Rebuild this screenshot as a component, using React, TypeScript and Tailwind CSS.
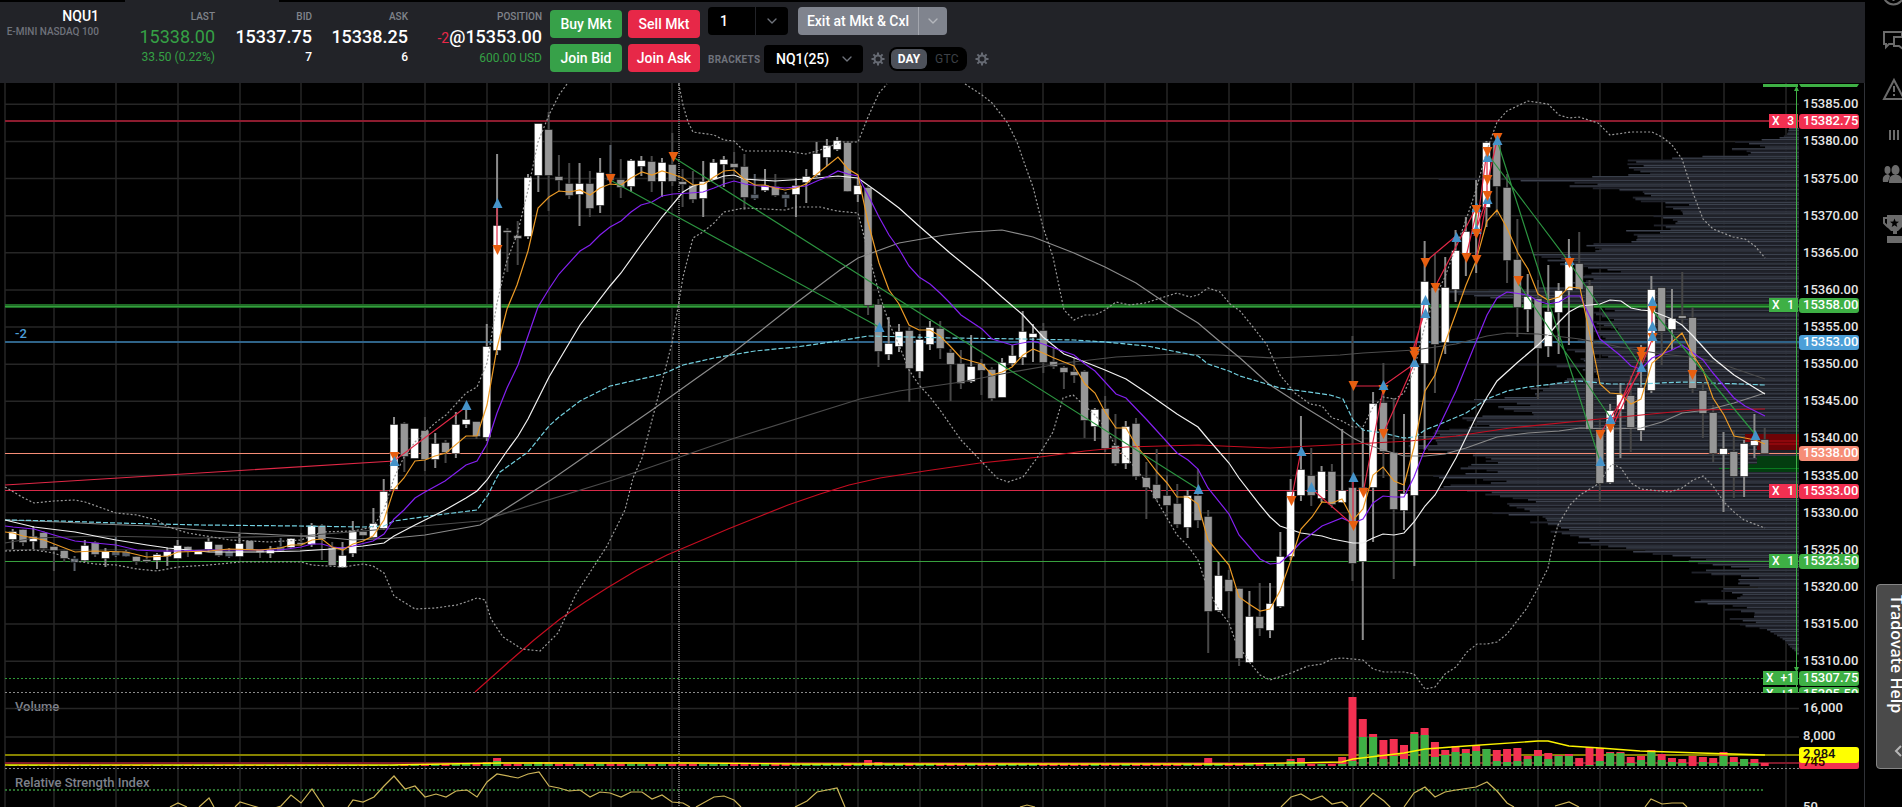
import { useState } from "react";
import { ChevronDown } from "lucide-react";
import clsx from "clsx";

type Point = [number, number];
type Kind = "up" | "down" | "flat";
// body top, body bottom, wick top, wick bottom
type Candle = [Kind, number, number, number, number];
type Trade = ["buy" | "sell", number, number];

const FIRST_X = 12.7;
const STEP = 10.306;
const LEFT = 5;
const RIGHT = 1799;
const TOP = 83;

const u: Kind = "up";
const d: Kind = "down";
const f: Kind = "flat";

const candles: Candle[] = [
  [u, 532, 539, 529, 549], [d, 530, 542, 529, 546], [u, 537, 541, 526, 549], [d, 533, 548, 531, 551],
  [d, 547, 550, 544, 571], [d, 551, 558, 550, 562], [f, 559, 562, 556, 571], [u, 546, 560, 540, 562],
  [d, 543, 554, 541, 557], [u, 552, 558, 548, 567], [f, 552, 555, 537, 557], [f, 552, 556, 550, 557],
  [d, 557, 561, 556, 565], [d, 560, 561, 552, 563], [u, 555, 560, 553, 569], [u, 552, 556, 548, 566],
  [u, 546, 558, 540, 558], [d, 547, 551, 546, 557], [u, 551, 554, 551, 554], [u, 542, 549, 538, 552],
  [d, 545, 555, 545, 557], [f, 552, 556, 548, 558], [u, 544, 556, 534, 556], [d, 541, 549, 541, 549],
  [d, 550, 552, 549, 558], [u, 550, 553, 546, 558], [f, 547, 551, 538, 552], [u, 539, 547, 538, 548],
  [d, 543, 544, 533, 546], [u, 526, 544, 523, 547], [d, 526, 539, 524, 560], [d, 548, 565, 542, 565],
  [u, 556, 567, 542, 567], [u, 531, 553, 521, 557], [d, 532, 535, 531, 536], [u, 524, 537, 508, 538],
  [u, 492, 528, 479, 530], [u, 425, 489, 417, 489], [d, 424, 456, 422, 472], [u, 429, 458, 429, 458],
  [d, 431, 459, 417, 471], [u, 444, 459, 433, 468], [d, 443, 452, 440, 463], [u, 425, 453, 412, 458],
  [u, 420, 424, 408, 428], [d, 422, 436, 422, 439], [u, 347, 437, 324, 441], [u, 226, 350, 154, 355],
  [d, 231, 232, 228, 272], [d, 236, 238, 221, 265], [u, 178, 236, 174, 239], [u, 124, 175, 124, 192],
  [d, 130, 175, 112, 211], [d, 177, 180, 155, 191], [d, 184, 195, 163, 199], [u, 184, 194, 163, 226],
  [d, 184, 208, 171, 217], [u, 173, 205, 158, 213], [f, 174, 180, 145, 184], [d, 180, 187, 159, 198],
  [u, 161, 186, 159, 192], [u, 161, 166, 156, 176], [d, 162, 181, 156, 192], [u, 163, 181, 158, 197],
  [d, 165, 181, 133, 186], [d, 182, 184, 169, 207], [d, 186, 199, 171, 203], [u, 182, 198, 161, 217],
  [u, 163, 179, 159, 180], [u, 160, 164, 156, 187], [d, 164, 167, 152, 174], [d, 167, 197, 154, 210],
  [f, 195, 198, 174, 200], [u, 186, 190, 169, 192], [d, 187, 195, 174, 197], [f, 195, 198, 192, 207],
  [u, 186, 194, 178, 217], [u, 177, 182, 169, 203], [u, 154, 175, 142, 177], [u, 146, 157, 139, 166],
  [u, 141, 149, 137, 151], [d, 143, 191, 142, 192], [u, 186, 194, 178, 202], [d, 188, 305, 186, 315],
  [d, 305, 351, 299, 367], [u, 344, 354, 317, 360], [u, 332, 346, 324, 352], [d, 331, 368, 327, 402],
  [u, 340, 371, 334, 378], [u, 328, 344, 321, 350], [d, 329, 348, 321, 359], [d, 353, 364, 349, 401],
  [d, 364, 383, 350, 389], [u, 367, 381, 335, 383], [d, 364, 370, 359, 395], [d, 370, 398, 367, 401],
  [u, 363, 397, 358, 397], [u, 356, 363, 345, 366], [u, 332, 357, 311, 365], [u, 334, 337, 324, 362],
  [d, 331, 362, 323, 373], [d, 362, 366, 348, 369], [d, 368, 372, 366, 389], [d, 372, 375, 358, 383],
  [d, 372, 420, 370, 438], [u, 410, 426, 408, 441], [d, 409, 448, 396, 452], [d, 446, 463, 414, 466],
  [u, 427, 463, 421, 469], [d, 424, 476, 418, 480], [d, 478, 487, 462, 519], [d, 485, 498, 449, 501],
  [d, 496, 505, 475, 516], [d, 504, 524, 484, 528], [u, 496, 527, 490, 538], [d, 496, 520, 469, 528],
  [d, 517, 611, 510, 653], [u, 576, 610, 562, 612], [d, 580, 591, 570, 618], [d, 589, 658, 588, 666],
  [u, 617, 662, 591, 662], [d, 617, 628, 583, 636], [u, 604, 630, 583, 638], [u, 557, 606, 532, 608],
  [u, 492, 556, 479, 560], [u, 470, 495, 416, 501], [d, 476, 495, 448, 506], [u, 472, 498, 466, 502],
  [d, 472, 504, 464, 508], [u, 491, 502, 429, 503], [d, 488, 563, 336, 581], [u, 488, 561, 428, 640],
  [u, 404, 487, 392, 542], [d, 403, 451, 363, 478], [d, 453, 509, 398, 579], [u, 494, 510, 414, 530],
  [u, 366, 495, 355, 566], [u, 282, 363, 241, 450], [d, 288, 344, 254, 393], [u, 288, 342, 257, 354],
  [u, 251, 289, 230, 302], [u, 232, 253, 217, 276], [u, 209, 232, 180, 273], [u, 143, 207, 141, 227],
  [d, 143, 186, 135, 215], [d, 188, 260, 174, 283], [d, 260, 307, 219, 337], [u, 297, 309, 274, 332],
  [d, 299, 348, 280, 399], [u, 312, 346, 265, 357], [u, 291, 312, 283, 354], [u, 262, 290, 239, 345],
  [d, 264, 289, 232, 290], [d, 286, 429, 280, 430], [d, 430, 483, 420, 502], [u, 411, 482, 404, 484],
  [u, 395, 409, 383, 458], [d, 396, 427, 376, 452], [u, 388, 430, 345, 441], [u, 290, 390, 276, 393],
  [d, 288, 331, 288, 365], [u, 319, 329, 289, 350], [d, 316, 318, 272, 325], [d, 318, 388, 307, 393],
  [d, 391, 413, 383, 438], [d, 413, 453, 405, 462], [u, 449, 454, 432, 512], [d, 452, 476, 430, 498],
  [u, 444, 476, 440, 497], [u, 441, 445, 414, 458], [d, 440, 453, 428, 453],
];

const emaFast =
  "5,532 13,533 23,536 44,540 75,552 95,551 126,552 147,557 168,556 178,552 209,551 229,549 260,550 280,548 291,545 301,545 312,540 322,539 332,547 343,550 353,544 363,541 373,536 384,520 394,489 404,478 415,461 425,460 435,456 446,453 466,436 477,436 487,405 497,348 507,309 517,285 528,251 538,208 549,197 559,191 569,192 580,190 590,195 600,188 610,184 621,185 631,178 642,172 652,175 662,171 672,174 683,178 693,185 704,184 714,177 724,171 734,170 744,179 755,185 765,185 775,188 785,190 796,188 806,184 817,174 827,166 838,157 848,169 858,175 868,222 879,263 889,290 899,304 909,325 919,330 930,330 940,336 950,346 961,358 971,361 982,364 992,375 1002,372 1012,367 1023,355 1033,349 1043,353 1054,358 1064,362 1074,366 1085,384 1095,393 1105,412 1116,428 1126,428 1136,445 1147,459 1157,472 1167,483 1177,497 1188,497 1198,504 1208,540 1218,552 1229,565 1239,597 1249,604 1260,611 1270,609 1280,591 1291,560 1301,529 1312,517 1322,502 1332,503 1342,499 1353,520 1363,509 1373,475 1383,467 1394,481 1404,485 1414,447 1425,391 1435,375 1445,343 1456,313 1466,285 1476,261 1487,221 1497,210 1507,228 1518,253 1528,269 1538,294 1548,300 1559,297 1569,287 1580,288 1590,335 1600,384 1610,393 1621,394 1631,404 1641,399 1652,363 1662,355 1672,342 1682,333 1693,355 1703,370 1713,398 1724,415 1734,436 1745,438 1755,440 1765,444";
const emaSlow =
  "5,526 13,527 34,529 54,535 75,541 95,543 116,545 137,550 157,551 178,551 209,550 240,550 280,550 301,547 312,544 322,544 332,547 343,548 353,546 373,541 384,534 394,519 404,510 415,498 425,492 445,481 466,465 477,461 487,444 497,413 507,388 518,365 528,336 538,307 549,289 559,274 580,251 590,245 600,235 610,227 621,221 631,212 641,205 652,202 662,196 673,194 690,193 703,192 714,188 724,184 734,181 745,184 760,186 785,188 806,186 817,181 827,177 838,171 848,174 858,176 868,195 879,217 889,235 899,249 909,266 919,277 930,284 940,293 950,303 961,315 982,329 992,339 1012,345 1033,341 1043,344 1054,348 1074,355 1085,364 1095,371 1116,394 1126,398 1147,420 1157,431 1177,453 1188,460 1198,469 1208,488 1229,514 1239,535 1260,559 1270,564 1280,563 1291,553 1301,542 1322,526 1342,518 1353,523 1363,519 1373,503 1383,496 1394,497 1404,497 1414,477 1425,449 1435,435 1456,391 1487,315 1497,298 1507,292 1528,295 1538,301 1548,304 1559,302 1569,296 1580,296 1590,317 1600,339 1621,356 1631,366 1641,369 1652,358 1672,350 1682,345 1703,360 1713,373 1734,398 1745,406 1765,416";
const sma20 =
  "5,520 34,527 75,532 95,536 116,540 147,545 168,548 209,552 260,552 300,551 332,549 363,546 384,543 394,536 415,525 445,510 466,498 477,491 487,480 507,451 518,436 528,419 549,377 580,325 610,286 621,273 641,245 662,217 683,192 693,186 704,183 724,176 734,175 744,179 775,181 806,179 838,176 858,178 879,193 899,208 919,226 950,253 982,279 1002,297 1023,315 1043,337 1064,354 1085,362 1105,370 1126,379 1147,393 1167,407 1177,414 1198,427 1208,439 1229,463 1239,478 1260,505 1270,517 1280,526 1301,533 1322,536 1332,539 1353,543 1363,543 1373,538 1383,534 1394,535 1404,533 1414,522 1425,506 1435,495 1456,458 1476,417 1487,397 1497,381 1518,362 1538,345 1548,335 1559,322 1569,312 1580,306 1600,304 1610,300 1621,301 1631,308 1641,310 1652,311 1672,319 1682,325 1693,336 1713,358 1734,375 1755,388 1765,394";
const sma50 =
  "5,520 60,522 100,524 150,526 200,530 240,533 280,535 322,537 353,540 394,538 425,535 480,525 551,480 610,439 652,410 694,380 735,351 796,303 840,270 858,258 899,243 945,235 971,232 1002,230 1033,237 1074,253 1105,267 1136,283 1167,304 1198,323 1218,340 1240,358 1270,385 1301,405 1332,424 1353,438 1363,443 1383,450 1404,456 1425,456 1445,454 1466,448 1497,437 1528,433 1559,431 1580,428 1610,429 1641,428 1662,422 1682,413 1707,410 1734,403 1765,393";
const sma100 =
  "5,543 34,538 100,536 200,538 300,536 363,531 480,521 613,480 735,438 860,399 899,391 961,382 1012,372 1064,363 1116,357 1177,354 1218,355 1276,358 1340,355 1363,353 1415,350 1456,344 1487,336 1507,333 1538,334 1580,339 1620,347 1662,354 1700,358 1730,367 1765,379";
const sma200 =
  "475,692 511,660 534,640 560,619 585,602 607,588 637,570 667,555 700,541 728,529 758,517 788,505 820,494 849,485 880,478 925,471 980,463 1040,457 1085,451 1126,447 1198,445 1270,448 1353,444 1410,441 1456,436 1510,428 1600,419 1693,410 1765,409";
const vwap =
  "5,520 60,521 116,523 200,525 300,526 363,527 384,526 394,521 415,518 445,514 477,510 488,495 496,479 500,472 528,452 549,426 559,417 580,401 610,386 641,379 663,374 683,365 714,358 755,351 796,347 838,341 868,336 950,338 1023,339 1074,340 1105,342 1147,346 1198,356 1208,364 1229,371 1240,376 1280,388 1330,395 1343,399 1353,420 1363,430 1383,433 1404,438 1415,437 1425,430 1445,422 1466,413 1487,399 1507,391 1528,387 1569,382 1580,381 1610,384 1640,384 1682,382 1740,384 1765,385";
const upperBands = [
  "5,487 22,497 34,503 54,501 75,500 85,502 116,513 137,515 157,520 168,527 188,533 230,540 270,542 301,540 322,532 353,531 373,527 384,510 394,478 404,457 415,442 435,423 446,415 466,393 477,387 487,363 497,303 507,260 517,235 528,190 538,142 549,115 559,95 567,84",
  "678,80 683,105 688,122 693,132 714,135 724,140 734,141 744,151 785,151 806,154 820,150 842,142 858,142 868,117 879,93 887,84",
  "965,84 982,95 992,103 1007,122 1017,142 1025,165 1033,187 1043,227 1053,257 1064,310 1074,320 1085,315 1095,315 1105,310 1116,302 1130,305 1145,303 1177,293 1190,297 1198,295 1208,288 1220,292 1230,304 1240,311 1253,327 1267,345 1280,375 1295,393 1310,404 1322,406 1332,418 1340,420 1353,427 1363,427 1373,407 1383,397 1395,399 1404,393 1414,370 1425,325 1435,297 1445,277 1456,247 1466,220 1476,190 1487,150 1497,122 1507,111 1528,101 1548,104 1559,115 1569,118 1579,117 1598,123 1610,135 1631,132 1652,132 1662,137 1672,145 1682,159 1693,193 1703,219 1713,229 1723,233 1733,237 1745,239 1755,246 1765,258",
];
const lowerBand =
  "5,551 34,550 54,553 75,561 95,564 116,565 137,569 157,571 178,567 209,565 240,562 301,562 312,565 343,567 363,564 373,566 384,573 394,596 415,609 435,608 457,605 466,602 477,598 485,600 491,619 503,637 522,649 540,651 558,633 576,594 607,546 625,510 633,478 642,458 652,420 662,382 672,343 683,277 693,238 703,232 714,223 724,212 744,208 765,209 785,210 796,207 820,207 837,211 858,213 865,240 879,293 889,323 899,345 909,370 919,385 930,397 940,410 961,440 982,462 997,478 1008,482 1023,477 1037,458 1053,432 1063,398 1073,395 1084,405 1095,415 1107,430 1116,447 1127,458 1147,483 1157,501 1177,535 1188,546 1198,560 1208,590 1219,610 1229,623 1235,640 1250,663 1260,675 1270,680 1291,673 1308,666 1322,664 1332,659 1342,658 1363,660 1373,669 1384,672 1404,672 1414,674 1425,689 1435,687 1445,674 1456,667 1467,652 1477,644 1487,644 1497,642 1507,634 1527,608 1538,588 1548,568 1553,543 1558,525 1570,505 1580,495 1598,484 1612,464 1621,468 1631,483 1641,489 1670,492 1682,488 1693,480 1703,476 1713,486 1724,502 1734,512 1744,520 1765,528";

const rsi = [
  "170,807 178,803 187,807",
  "199,807 209,798 214,807",
  "235,807 240,802 250,805 260,808",
  "275,808 281,806 291,795 301,803 312,789 324,807",
  "348,807 353,800 363,802 374,797 384,786 394,776 405,789 415,786 425,797 436,794 446,797 456,791 467,790 477,797 487,782 497,774 518,778 528,774 539,772 549,786 559,788 569,791 580,790 590,797 600,792 610,793 621,797 631,792 642,792 652,799 662,795 672,802 683,803 690,807",
  "696,807 714,797 724,796 734,800 741,807",
  "795,807 807,801 817,792 827,790 837,788 845,807",
  "1020,807 1027,805 1035,807",
  "1281,807 1291,797 1301,794 1311,800 1322,796 1332,804 1342,802 1348,807",
  "1360,807 1373,793 1384,801 1391,808",
  "1404,807 1414,793 1425,787 1435,797 1445,792 1456,790 1476,787 1487,782 1497,791 1507,803 1514,807",
  "1555,806 1569,802 1579,807",
  "1645,807 1651,799 1662,804 1672,803 1683,803 1687,807",
];

// y, left edge of the traded-volume row
const profile: Point[] = [
  [128, 1789], [134, 1787], [138, 1778], [141, 1735], [143, 1748], [146, 1755], [148, 1741], [151, 1755],
  [154, 1741], [156, 1685], [158, 1684], [159, 1633], [162, 1637], [163, 1620], [167, 1642], [170, 1640],
  [173, 1646], [175, 1605], [177, 1607], [178, 1442], [180, 1524], [182, 1575], [184, 1590], [186, 1583],
  [188, 1610], [191, 1640], [194, 1633], [197, 1644], [200, 1635], [204, 1675], [210, 1680], [215, 1665],
  [220, 1675], [223, 1662], [228, 1678], [230, 1620], [232, 1650], [236, 1645], [240, 1630], [245, 1595],
  [248, 1600], [250, 1595], [253, 1543], [256, 1545], [258, 1560], [260, 1537], [262, 1560], [264, 1575],
  [268, 1590], [270, 1610], [273, 1603], [276, 1580], [278, 1590], [281, 1568], [283, 1590], [286, 1580],
  [290, 1462], [293, 1465], [297, 1487], [300, 1520], [305, 1590], [310, 1600], [320, 1600], [330, 1606],
  [340, 1590], [350, 1580], [355, 1600], [362, 1590], [364, 1503], [366, 1560], [370, 1600], [375, 1590],
  [380, 1573], [385, 1533], [390, 1550], [393, 1530], [397, 1520], [401, 1441], [403, 1525], [407, 1510],
  [410, 1515], [413, 1535], [418, 1465], [421, 1475], [424, 1460], [426, 1490], [430, 1435], [433, 1423],
  [436, 1430], [440, 1435], [445, 1420], [450, 1430], [455, 1490], [458, 1495], [460, 1480], [463, 1490],
  [466, 1475], [468, 1460], [470, 1490], [473, 1485], [476, 1423], [480, 1505], [483, 1470], [488, 1435],
  [490, 1460], [494, 1500], [497, 1510], [500, 1525], [505, 1515], [510, 1520], [513, 1500], [516, 1545],
  [520, 1535], [524, 1560], [528, 1556], [532, 1570], [536, 1575], [540, 1585], [543, 1590], [547, 1615],
  [552, 1650], [556, 1680], [560, 1700], [563, 1705], [566, 1725], [568, 1738], [572, 1694], [576, 1745],
  [580, 1755], [582, 1738], [586, 1750], [590, 1730], [594, 1740], [598, 1720], [602, 1694], [606, 1735],
  [608, 1730], [612, 1755], [617, 1738], [622, 1757], [624, 1735], [628, 1765], [634, 1776], [640, 1785],
  [646, 1790], [650, 1795], [655, 1798],
];

const profileRows = Array.from({ length: 284 }, (_, i) => {
  const y = 128 + i * 1.856;
  const next = Math.max(1, profile.findIndex((p) => p[0] >= y));
  const [y0, x0] = profile[next - 1];
  const [y1, x1] = profile[next];
  const mid = x0 + ((x1 - x0) * (y - y0)) / (y1 - y0);
  const jitter = y > 142 && y < 620 ? ((i * 37) % 31) - 15 : 0;
  return { y, x: Math.min(mid + jitter, RIGHT - 1), bright: (i * 7) % 5 < 3 };
});

// in drawing order
const trades: Trade[] = [
  ["sell", 394, 457], ["buy", 394, 461], ["buy", 466, 405], ["buy", 497, 203], ["sell", 497, 250],
  ["sell", 610, 179], ["sell", 673, 157], ["buy", 879, 327], ["buy", 1198, 489], ["buy", 1301, 451],
  ["sell", 1291, 501], ["buy", 1311, 487], ["buy", 1353, 477], ["sell", 1353, 386], ["sell", 1353, 526],
  ["sell", 1363, 493], ["sell", 1383, 390], ["buy", 1383, 385], ["sell", 1383, 434], ["buy", 1414, 362],
  ["sell", 1414, 356], ["sell", 1414, 352], ["buy", 1425, 300], ["buy", 1425, 313], ["sell", 1425, 263],
  ["sell", 1435, 288], ["buy", 1456, 237], ["sell", 1466, 258], ["buy", 1476, 207], ["sell", 1476, 210],
  ["buy", 1476, 229], ["sell", 1476, 234], ["sell", 1476, 260], ["buy", 1487, 157], ["sell", 1487, 152],
  ["sell", 1487, 180], ["buy", 1487, 199], ["sell", 1487, 196], ["sell", 1497, 138], ["buy", 1497, 140],
  ["sell", 1518, 281], ["buy", 1569, 260], ["sell", 1569, 263], ["sell", 1600, 435], ["buy", 1600, 461],
  ["sell", 1610, 428], ["buy", 1610, 419], ["sell", 1641, 352], ["sell", 1641, 357], ["buy", 1641, 367],
  ["sell", 1652, 309], ["buy", 1652, 301], ["sell", 1652, 338], ["buy", 1652, 336], ["buy", 1652, 326],
  ["sell", 1692, 375], ["buy", 1755, 435],
];
const losingTrades =
  "M5 485L394 461L466 407M497 205V250M1291 501L1301 451M1312 489L1353 525V477M1353 386H1383L1414 364L1383 434M1363 493L1383 390M1414 356L1425 300M1413 350L1424 314M1425 262L1456 236M1435 287L1476 208M1466 257L1476 214M1476 260L1487 198L1474 236M1476 233L1487 150V200M1487 185L1497 140M1600 434L1641 370M1610 427L1641 355M1612 428L1643 362L1652 340V310";
const winningTrades =
  "M610 180L879 327M673 157L1198 489M1489 156L1569 262L1641 366M1497 140L1548 300L1600 461M1518 283L1610 417M1652 310L1755 434M1476 212V230";

// bar index -> [bar top, buy volume top]
const volume: Record<number, Point> = {
  46: [762, 763], 47: [758, 761], 51: [762, 762], 52: [762, 764], 83: [760, 765], 84: [762, 765],
  116: [758, 764], 124: [759, 761], 125: [758, 763], 129: [757, 764], 130: [697, 761], 131: [719, 737],
  132: [734, 737], 133: [740, 759], 134: [739, 756], 135: [745, 759], 136: [732, 734], 137: [728, 735],
  138: [742, 757], 139: [750, 755], 140: [746, 752], 141: [749, 753], 142: [745, 751], 143: [749, 749],
  144: [750, 761], 145: [749, 762], 146: [748, 761], 147: [756, 759], 148: [750, 756], 149: [753, 759],
  150: [755, 756], 151: [754, 756], 152: [758, 766], 153: [747, 765], 154: [748, 761], 155: [752, 753],
  156: [752, 753], 157: [757, 763], 158: [756, 760], 159: [750, 752], 160: [754, 760], 161: [758, 762],
  162: [759, 763], 163: [756, 766], 164: [757, 762], 165: [758, 763], 166: [752, 756], 167: [757, 762],
  168: [759, 759], 169: [759, 763], 170: [763, 766],
};

const prices = Array.from({ length: 16 }, (_, i) => 15385 - i * 5);
const priceY = (p: number) => 104.3 + (15385 - p) * 7.425;

const tags = [
  { y: 121, text: "15382.75", color: "#f23051", side: "X", qty: "3" },
  { y: 305, text: "15358.00", color: "#3eb045", side: "X", qty: "1" },
  { y: 342, text: "15353.00", color: "#4c9fd8" },
  { y: 453, text: "15338.00", color: "#f68d76" },
  { y: 491, text: "15333.00", color: "#f23051", side: "X", qty: "1" },
  { y: 561, text: "15323.50", color: "#3eb045", side: "X", qty: "1" },
  { y: 678, text: "15307.75", color: "#3eb045", side: "X", qty: "+1" },
  { y: 694, text: "15305.50", color: "#3eb045", side: "X", qty: "+1" },
];

const wickColor = { up: "#8c8c8c", down: "#474747", flat: "#5b626b" };
const bodyColor = { up: "#ffffff", down: "#979797", flat: "#59616b" };

function Grid() {
  return (
    <g stroke="#262626" strokeWidth={1.5}>
      <path d={`M${LEFT} ${TOP}V807`} />
      {Array.from({ length: 29 }, (_, i) => (
        <path key={i} d={`M${54 + Math.round(i * 61.84)} ${TOP}V807`} />
      ))}
      {prices.map((p) => (
        <path key={p} d={`M${LEFT} ${priceY(p)}H${RIGHT}`} />
      ))}
      <path d={`M${LEFT} 708.500H${RIGHT}M${LEFT} 737H${RIGHT}`} />
    </g>
  );
}

function VolumeProfile() {
  return (
    <g>
      {profileRows.map((row) => (
        <g key={row.y}>
          <rect x={row.x} y={row.y} width={RIGHT - row.x} height={1.9} fill="#20222a" />
          {row.bright && <rect x={row.x} y={row.y} width={RIGHT - row.x} height={0.8} fill="#454c59" />}
        </g>
      ))}
      <path d="M1745 434H1799V450H1757V442H1745Z" fill="#6d0306" />
      <path d="M1745 441H1799M1755 444H1799" stroke="#b00d12" />
      <path d="M1757 456H1799V472H1748V464H1757Z" fill="#033d10" />
      <path d="M1719 468.500H1799" stroke="#0a7a20" />
    </g>
  );
}

function Candles() {
  return (
    <g>
      {candles.map(([kind, top, bottom, high, low], i) => {
        const x = FIRST_X + i * STEP;
        return (
          <g key={i}>
            <rect x={x - 1} y={high} width={2} height={low - high} fill={wickColor[kind]} />
            <rect x={x - 4} y={top - 0.5} width={8} height={bottom - top + 1} fill={bodyColor[kind]} stroke="#000" strokeOpacity={0.5} />
          </g>
        );
      })}
    </g>
  );
}

function VolumePane() {
  return (
    <g>
      <path d={`M${LEFT} 755H${RIGHT}`} stroke="#868200" strokeWidth={2} />
      <path d={`M${LEFT} 763H${RIGHT}`} stroke="#7d1a2a" strokeWidth={2} />
      {candles.map(([kind], i) => {
        const x = FIRST_X + i * STEP - 4;
        const idle = i < 40 ? 765 : 764;
        const [top, buy] = volume[i] ?? [idle, kind === "up" ? idle : 766];
        return (
          <g key={i}>
            <rect x={x} y={top} width={8} height={766 - top} fill="#f23051" />
            <rect x={x} y={buy} width={8} height={766 - buy} fill="#3eb045" />
          </g>
        );
      })}
      <polyline
        points="5,765 390,765 500,763 690,763 800,764 1240,764 1342,762 1353,759 1404,753 1425,749 1466,746 1538,741 1548,741 1569,746 1600,748 1640,751 1700,753 1765,755"
        fill="none"
        stroke="#fcf400"
        strokeWidth={1.4}
      />
    </g>
  );
}

function OrderLines() {
  return (
    <g fill="none">
      <path d={`M${LEFT} 121H${RIGHT}`} stroke="#8c1c2f" strokeWidth={2} />
      <path d={`M${LEFT} 306H${RIGHT}`} stroke="#1f6a26" strokeWidth={4} />
      <path d={`M${LEFT} 306.500H${RIGHT}`} stroke="#34a03c" />
      <path d={`M${LEFT} 342H${RIGHT}`} stroke="#2f6388" strokeWidth={2} />
      <path d={`M${LEFT} 453.500H${RIGHT}`} stroke="#f68d76" />
      <path d={`M${LEFT} 490.500H${RIGHT}`} stroke="#d92a49" />
      <path d={`M${LEFT} 561.500H${RIGHT}`} stroke="#38a03e" />
      <path d={`M${LEFT} 678.500H${RIGHT}`} stroke="#2f9a37" strokeDasharray="2 2" />
      <path d={`M${LEFT} 692.500H${RIGHT}M${LEFT} 768.500H${RIGHT}`} stroke="#8a8a8a" strokeDasharray="2 2" />
      <path d={`M${LEFT} 790H1765`} stroke="#2c7030" strokeWidth={2} strokeDasharray="2 2" />
      <path d={`M679 ${TOP}V807`} stroke="#6b6b6b" strokeWidth={2} strokeDasharray="1 1" />
    </g>
  );
}

function PriceAxis() {
  return (
    <g fontSize={13} fontWeight={500}>
      <rect x={RIGHT} y={TOP} width={65} height={724} fill="#000" />
      {prices.map((p) => (
        <text key={p} x={1803} y={priceY(p) + 4} fill="#e6e6e6">
          {p.toFixed(2)}
        </text>
      ))}
      <g clipPath="url(#pricePane)">
        {tags.map((tag) => (
          <g key={tag.text} fill={tag.color}>
            <rect x={RIGHT} y={tag.y - 7} width={60} height={15} rx={3} />
            <text x={1803} y={tag.y + 4} fill="#fff">
              {tag.text}
            </text>
            {tag.side && (
              <>
                <rect x={tag.qty === "+1" ? 1763 : 1769} y={tag.y - 7} width={tag.qty === "+1" ? 35 : 29} height={14} />
                <text x={tag.qty === "+1" ? 1766 : 1772} y={tag.y + 4} fontSize={12} fill="#fff">
                  {tag.side}
                </text>
                <text x={1794} y={tag.y + 4} fontSize={12} textAnchor="end" fill="#fff">
                  {tag.qty}
                </text>
              </>
            )}
          </g>
        ))}
        <path d="M1763 84H1798V87H1763ZM1799 84H1859L1857 87H1801Z" fill="#3eb045" />
        <path d="M1796.500 87V692" stroke="#3eb045" />
        <path d="M1796.500 86L1799 91H1794ZM1796.500 672L1799 667H1794Z" fill="#3eb045" />
      </g>
      <text x={1803} y={712} fill="#e6e6e6">16,000</text>
      <text x={1803} y={740} fill="#e6e6e6">8,000</text>
      <rect x={RIGHT} y={760} width={60} height={9} rx={2} fill="#f23051" />
      <rect x={RIGHT} y={747} width={60} height={16} rx={3} fill="#ffff00" />
      <text x={1803} y={758} fill="#111">2,984</text>
      <text x={1803} y={766} fill="#300">745</text>
      <text x={1803} y={811} fill="#e6e6e6">50</text>
      <path d="M1864.500 83V807" stroke="#303238" />
    </g>
  );
}

function Chart() {
  return (
    <svg
      viewBox="0 83 1865 724"
      preserveAspectRatio="xMinYMin slice"
      className="block h-full w-full"
      fontFamily="Roboto, sans-serif"
      role="img"
      aria-label="NQU1 price chart"
    >
      <defs>
        <clipPath id="pricePane">
          <rect x={0} y={TOP} width={1865} height={610} />
        </clipPath>
      </defs>
      <Grid />
      <VolumeProfile />
      <OrderLines />
      <Candles />
      <g fill="none" strokeWidth={1.2} clipPath="url(#pricePane)">
        <polyline points={sma100} stroke="#4c4c4c" />
        <polyline points={sma50} stroke="#8a8a8a" />
        <polyline points={sma200} stroke="#c40d20" />
        <polyline points={vwap} stroke="#72d0e0" strokeDasharray="5 2" />
        {upperBands.map((points) => (
          <polyline key={points} points={points} stroke="#9a9a9a" strokeDasharray="2 2" />
        ))}
        <polyline points={lowerBand} stroke="#9a9a9a" strokeDasharray="2 2" />
        <polyline points={sma20} stroke="#f2f2f2" />
        <polyline points={emaSlow} stroke="#8420f0" />
        <polyline points={emaFast} stroke="#eb9a26" />
        <path d={losingTrades} stroke="#e02846" />
        <path d={winningTrades} stroke="#2c9440" />
      </g>
      {trades.map(([side, x, y], i) =>
        side === "buy" ? (
          <path key={i} d={`M${x + 0.5} ${y - 5}l5 10h-10z`} fill="#4593c9" />
        ) : (
          <path key={i} d={`M${x - 4.5} ${y - 5}h10l-5 10z`} fill="#e85f10" />
        ),
      )}
      <VolumePane />
      <g fill="none" stroke="#cdb458" strokeWidth={1.2}>
        {rsi.map((points) => (
          <polyline key={points} points={points} />
        ))}
      </g>
      <g fontSize={13} fontWeight={500} fill="#7d808a">
        <text x={15} y={711}>Volume</text>
        <path d="M15 708.500H60" stroke="#3a3a3a" />
        <text x={15} y={787}>Relative Strength Index</text>
        <text x={15} y={338} fill="#4c9fd8">-2</text>
      </g>
      <PriceAxis />
    </svg>
  );
}

type QuoteProps = {
  label: string;
  sub: string;
  positive?: boolean;
  className: string;
  children: React.ReactNode;
};

function Quote({ label, sub, positive, className, children }: QuoteProps) {
  return (
    <div className={clsx("flex shrink-0 flex-col pt-px text-right", className)}>
      <span className="text-[10px] leading-3 font-medium text-[#80838b]">{label}</span>
      <span className="mt-1 text-lg leading-5 font-medium text-white">{children}</span>
      <span className={clsx("mt-0.5 text-xs leading-4", positive ? "text-[#35a045]" : "font-medium text-white")}>{sub}</span>
    </div>
  );
}

function OrderButton({ label, buy }: { label: string; buy?: boolean }) {
  return (
    <button
      className={clsx(
        "h-7 w-[72px] rounded text-sm leading-none font-medium whitespace-nowrap text-white",
        buy ? "bg-[#37a149]" : "bg-[#e72848]",
      )}
    >
      {label}
    </button>
  );
}

function Header() {
  const [qty, setQty] = useState("1");
  const [tif, setTif] = useState("DAY");

  return (
    <header className="relative flex h-[83px] shrink-0 items-start border-t-2 border-black bg-[#222328]">
      <div className="absolute -top-0.5 left-[125px] h-0.5 w-[154px] bg-[#222328]" />
      <div className="flex pt-2">
        <div className="w-[99px] shrink-0 text-right whitespace-nowrap">
          <div className="text-sm leading-3 font-medium text-white">NQU1</div>
          <div className="mt-0.5 text-[10px] leading-4 font-medium text-[#6f727b]">E-MINI NASDAQ 100</div>
        </div>
        <Quote label="LAST" sub="33.50 (0.22%)" positive className="w-[116px]">
          <span className="font-normal text-[#35a045]">15338.00</span>
        </Quote>
        <Quote label="BID" sub="7" className="w-[97px]">15337.75</Quote>
        <Quote label="ASK" sub="6" className="w-24">15338.25</Quote>
        <Quote label="POSITION" sub="600.00 USD" positive className="w-[134px]">
          <span className="text-sm font-normal text-[#e72848]">-2</span>@15353.00
        </Quote>
      </div>
      <div className="ml-2 grid shrink-0 grid-cols-2 gap-1.5 pt-2">
        <OrderButton label="Buy Mkt" buy />
        <OrderButton label="Sell Mkt" />
        <OrderButton label="Join Bid" buy />
        <OrderButton label="Join Ask" />
      </div>
      <div className="ml-2 flex flex-col gap-2.5 pt-[5px]">
        <div className="flex gap-2.5">
          <div className="flex h-7 overflow-hidden rounded bg-black text-white">
            <input
              aria-label="Quantity"
              value={qty}
              onChange={(e) => setQty(e.target.value)}
              className="w-12 border-r border-[#222328] bg-transparent pl-3 text-sm font-medium outline-none"
            />
            <button aria-label="Quantity presets" className="flex w-8 items-center justify-center text-[#70747c]">
              <ChevronDown size={16} />
            </button>
          </div>
          <div className="flex h-7 overflow-hidden rounded bg-[#80848e]">
            <button className="w-[121px] border-r border-[#a3a6ae] text-sm leading-none font-medium whitespace-nowrap text-white">
              Exit at Mkt &amp; Cxl
            </button>
            <button aria-label="Exit options" className="flex w-7 items-center justify-center text-[#b4b7bd]">
              <ChevronDown size={16} />
            </button>
          </div>
        </div>
        <div className="flex items-center">
          <label htmlFor="brackets" className="w-14 text-[10px] font-bold tracking-wide text-[#6f727b]">
            BRACKETS
          </label>
          <div className="relative">
            <select id="brackets" className="h-7 w-[99px] appearance-none rounded bg-black pl-3 text-sm font-medium text-white">
              <option>NQ1(25)</option>
            </select>
            <ChevronDown size={16} className="pointer-events-none absolute top-1.5 right-2 text-[#70747c]" />
          </div>
          <button aria-label="Bracket settings" className="ml-2 text-[#666a73]">
            <Gear />
          </button>
          <div className="ml-1 flex h-6 w-[78px] items-center gap-0.5 rounded-lg bg-black p-0.5 text-xs">
            {["DAY", "GTC"].map((item) => (
              <button
                key={item}
                onClick={() => setTif(item)}
                className={clsx(
                  "h-5 flex-1 rounded-md leading-none",
                  tif === item ? "bg-[#4d515a] font-bold text-white" : "tracking-wide text-[#3d4047]",
                )}
              >
                {item}
              </button>
            ))}
          </div>
          <button aria-label="Duration settings" className="ml-2 text-[#666a73]">
            <Gear />
          </button>
        </div>
      </div>
    </header>
  );
}

function Gear() {
  return (
    <svg width="14" height="14" viewBox="0 0 14 14">
      <circle cx="7" cy="7" r="3.500" fill="none" stroke="currentColor" strokeWidth="2" />
      <path
        d="M7 0.500V3M7 11V13.500M0.500 7H3M11 7H13.500M2.400 2.400L4.200 4.200M9.800 9.800L11.600 11.600M11.600 2.400L9.800 4.200M4.200 9.800L2.400 11.600"
        stroke="currentColor"
        strokeWidth="2"
      />
    </svg>
  );
}

function Sidebar() {
  return (
    <aside className="flex w-[37px] shrink-0 flex-col overflow-hidden bg-black text-[#6b6b6b]">
      <svg width="37" height="260" viewBox="1865 0 37 260" fill="none" stroke="currentColor" strokeWidth="2" aria-hidden="true">
        <circle cx="1893.500" cy="-5.500" r="10" />
        <path d="M1893.500 -2V1" />
        <path d="M1893 44H1889L1886 47V44H1884V32H1902V36" />
        <path d="M1894 37H1906V46H1903V49L1899 46H1894Z" />
        <path d="M1894 80L1904 99H1884Z" />
        <path d="M1894 86V92M1894 94V96" />
        <path d="M1890 130V140M1894 130V140M1898 130V140" />
        <g fill="currentColor" stroke="none">
          <ellipse cx="1887.500" cy="170" rx="3" ry="4" />
          <path d="M1883 182C1882 177 1884 175 1888 174L1890 176L1888 182Z" />
          <ellipse cx="1895.500" cy="170" rx="4" ry="5" />
          <path d="M1889 183C1889 178 1890 176 1893 175H1898C1901 176 1902 178 1902 183Z" />
          <path d="M1887 215H1902V227L1898 231H1891L1887 227Z" />
          <rect x="1893" y="231" width="4" height="3" />
          <rect x="1887" y="236" width="15" height="7" />
        </g>
        <path d="M1887 218H1884V223L1888 227" />
        <path d="M1894.500 218.500L1895.700 221.600L1899 221.700L1896.400 223.800L1897.300 227L1894.500 225.200L1891.700 227L1892.600 223.800L1890 221.700L1893.300 221.600Z" fill="#000" stroke="none" />
      </svg>
      <button className="mt-[324px] ml-[11px] flex h-[185px] w-10 flex-col items-start justify-between rounded-l border border-[#858585] bg-[#4a4a4a] py-2.5 pl-2.5 text-white">
        <span className="text-base leading-5 font-semibold whitespace-nowrap [font-family:'Open_Sans',sans-serif] [writing-mode:vertical-rl]">
          Tradovate Help
        </span>
        <svg width="16" height="14" viewBox="0 0 16 14" fill="none" stroke="#b5b5b5" strokeWidth="2" className="ml-1.5">
          <path d="M8 2L3 7L8 12" />
        </svg>
      </button>
    </aside>
  );
}

export default function App() {
  return (
    <div className="flex h-screen overflow-hidden bg-black font-[Roboto,sans-serif]">
      <main className="flex min-w-0 flex-1 flex-col">
        <Header />
        <div className="min-h-0 flex-1">
          <Chart />
        </div>
      </main>
      <Sidebar />
    </div>
  );
}
